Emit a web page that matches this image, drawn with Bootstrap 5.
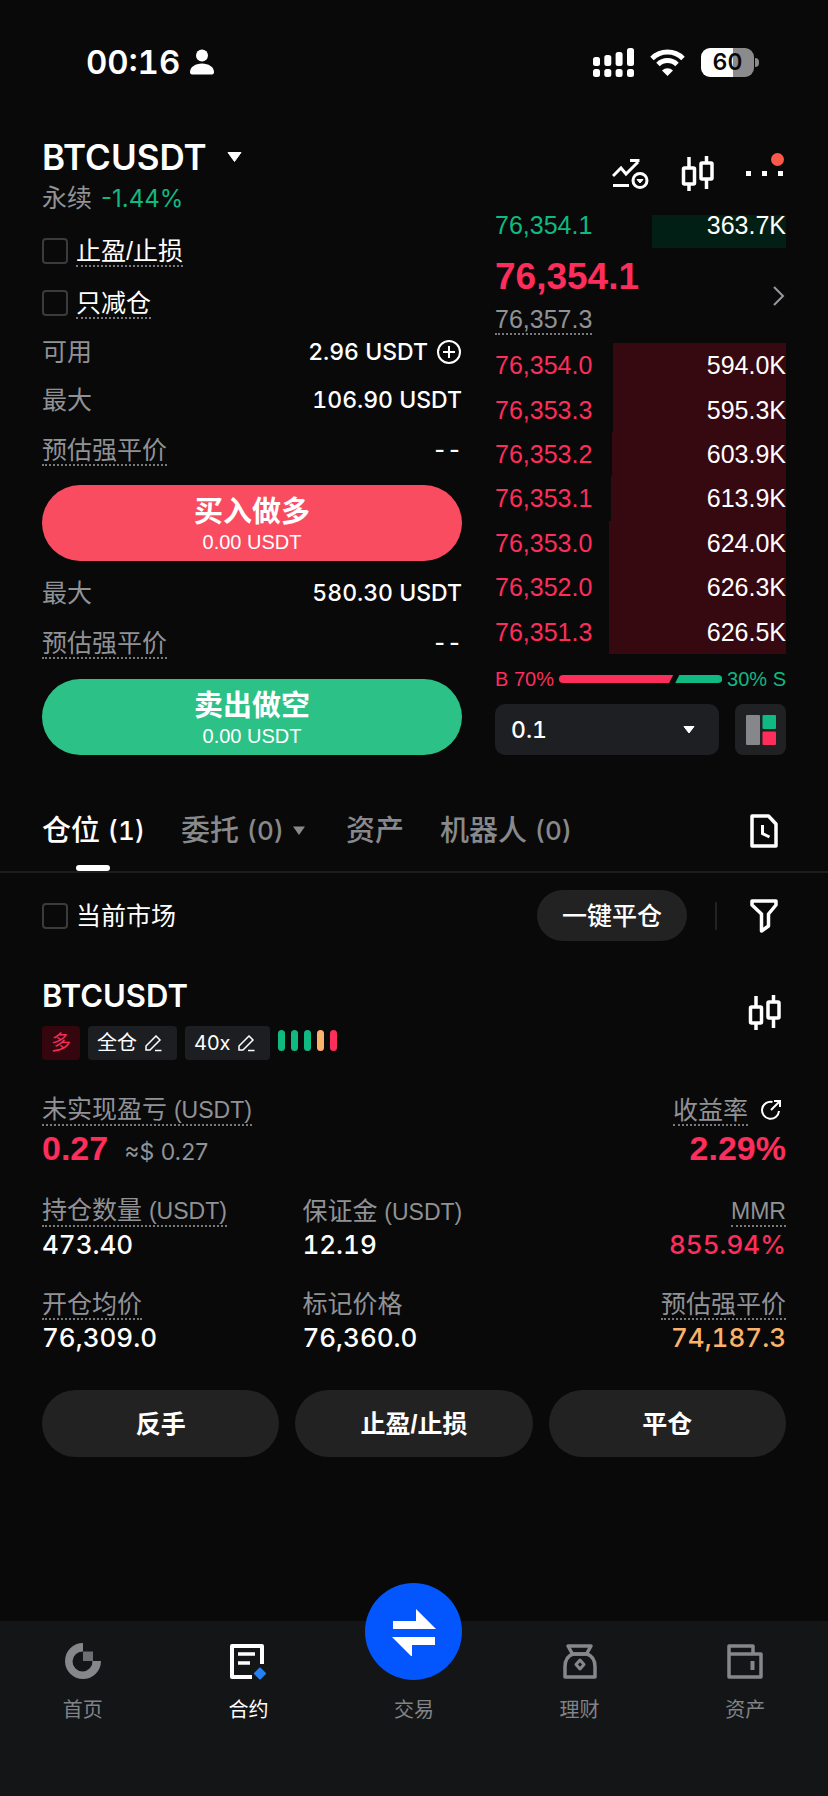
<!DOCTYPE html>
<html lang="zh-CN" data-bs-theme="dark">
<head>
<meta charset="utf-8">
<meta name="viewport" content="width=device-width, initial-scale=1">
<title>BTCUSDT 永续</title>
<link href="https://cdn.jsdelivr.net/npm/bootstrap@5.3.0/dist/css/bootstrap.min.css" rel="stylesheet">
<style>
  :root { --up: #fd2d5c; --down: #0fb981; --muted: #909296; --panel: #222222; --chip: #1c1e22; }
  body { background: #090909; color: #fff; font-family: "Liberation Sans", "Noto Sans CJK SC", sans-serif; font-size: 24px; line-height: 36px; }
  button, select { font-family: inherit; color: inherit; }
  svg { display: block; flex: none; }
  .gutter { padding-left: 42px; padding-right: 42px; }
  .inter { font-family: Inter, "Noto Sans CJK SC", sans-serif; font-variant-numeric: tabular-nums; }
  .inter.prop { font-variant-numeric: normal; }
  .c-up { color: var(--up); } .c-down { color: var(--down); } .c-muted { color: var(--muted); } .c-warn { color: #fbb26a; }
  .zh { font-size: 25px; }
  .zh .lat { font-size: 23px; }
  .hint { display: inline-block; line-height: 27px; margin-top: 2px; border-bottom: 2px dotted #77797c; white-space: nowrap; }
  .icon-btn { background: none; border: 0; padding: 0; display: block; }
  .tick.form-check-input { width: 26px; height: 26px; margin: 0; border: 2px solid #3b3b3d; border-radius: 4px; background-color: transparent; flex: none; }

  .status { padding: 40px 69px 48px 86px; }
  .status .clock { font-size: 33px; font-weight: 600; line-height: 44px; }
  .status .who { gap: 10px; }
  .battery { width: 53px; height: 29px; border-radius: 9px; background: linear-gradient(90deg, #fff 60%, #8b8b8b 60%); color: #090909; font-size: 23px; font-weight: 600; line-height: 29px; text-align: center; }
  .battery-tip { width: 4px; height: 9px; border-radius: 0 5px 5px 0; background: #8b8b8b; margin-left: 1px; }

  .pair { font-size: 35px; font-weight: 600; line-height: 50px; }
  .pair-sub { line-height: 33px; gap: 9px; }
  .dot-red { top: -18px; right: 2px; width: 13px; height: 13px; border-radius: 50%; background: #f95b4b; }

  .trade { display: grid; grid-template-columns: 420fr 291fr; column-gap: 33px; }
  .order { padding-top: 10px; }
  .opt { height: 52px; gap: 8px; }
  .info { height: 50px; }
  .info.avail { height: 46px; }
  .amount { font-size: 23px; font-weight: 500; }
  .cta { display: block; width: 100%; height: 76px; border: 0; color: #fff; padding: 4px 0 0; }
  .cta b { display: block; font-size: 29px; font-weight: 700; line-height: 34px; }
  .cta span { display: block; font-size: 20px; line-height: 26px; }
  .cta.buy { background: #f94c60; margin: 10px 0 7px; }
  .cta.sell { background: #2cc287; margin-top: 11px; }

  .depth { position: relative; display: flex; justify-content: space-between; align-items: center; font-size: 25px; }
  .depth i { position: absolute; top: 0; bottom: 0; right: 0; background: #360810; }
  .depth span { position: relative; }
  .depth.bid { height: 33px; align-items: flex-start; line-height: 20px; }
  .depth.bid i { background: #021f15; }
  .asks { display: grid; grid-auto-rows: 1fr; height: 311px; }
  .last { padding: 8px 0 3px; }
  .last strong { display: block; font-size: 37px; line-height: 42px; }
  .last .index-line { height: 42px; font-size: 25px; }
  .sentiment { height: 50px; font-size: 20px; gap: 5px; }
  .sentiment span { white-space: nowrap; }
  .sentiment svg { flex: 1; min-width: 0; height: 8px; }
  .step { height: 51px; border-radius: 10px; background-color: #1d1f23; border: 0; font-size: 23px; font-weight: 500; padding: 0 48px 0 16px; appearance: none; width: 100%; }
  .step-wrap { position: relative; flex: 1; }
  .step-wrap svg { position: absolute; right: 24px; top: 22px; pointer-events: none; }
  .book-mode { width: 51px; height: 51px; border-radius: 8px; background: #1f2123; }

  .tabs { margin-top: 36px; height: 82px; border-bottom: 2px solid #1d1d1d; gap: 36px; }
  .tabs a { position: relative; display: flex; align-items: center; height: 80px; font-size: 29px; font-weight: 500; color: #88898c; text-decoration: none; white-space: nowrap; }
  .tabs a span { font-size: 26px; }
  .tabs a.active { color: #fff; }
  .tabs a.active::after { content: ""; position: absolute; bottom: 0; left: calc(50% - 17px); width: 34px; height: 6px; border-radius: 3px; background: #fff; }
  .filters { height: 85px; }
  .close-all { height: 51px; border: 0; background: var(--panel); font-size: 25px; font-weight: 500; padding: 0 25px; }
  .rule { width: 2px; height: 28px; background: #222; margin: 0 33px 0 28px; }
  .pos-name { font-size: 31px; font-weight: 600; line-height: 44px; }
  .chip { height: 34px; border: 0; border-radius: 4px; background: var(--chip); font-size: 20px; padding: 0 15px 0 9px; display: flex; align-items: center; gap: 8px; line-height: 34px; }
  .chip.side { background: #36060f; color: #f32e58; padding: 0 9px; }
  .risk { gap: 6px; }
  .risk i { width: 7px; height: 21px; border-radius: 4px; background: var(--down); }
  .risk .mid { background: #fbb26a; }
  .risk .high { background: var(--up); }
  .pos-head { padding-top: 16px; margin-bottom: 32px; }
  .total { margin-bottom: 23px; }
  .stats { display: grid; grid-template-columns: 35fr 35fr 30fr; row-gap: 25px; }
  .name { height: 36px; display: flex; align-items: center; }
  .end { text-align: right; }
  .end .name { justify-content: flex-end; }
  .val { font-size: 26px; font-weight: 500; line-height: 32px; }
  .val-lg { font-size: 34px; font-weight: 700; line-height: 40px; }
  .acts { margin-top: 36px; }
  .act { height: 67px; border: 0; background: var(--panel); font-size: 25px; font-weight: 700; flex: 1 1 0; }

  .dock { background: #141517; height: 175px; padding-top: 20px; }
  .dock a { position: relative; flex: 1 1 0; display: flex; flex-direction: column; align-items: center; color: #818386; text-decoration: none; font-size: 20px; line-height: 30px; }
  .dock a svg { height: 40px; margin-bottom: 14px; }
  .dock a.active { color: #fff; }
  .dock .swap { position: absolute; top: -58px; width: 97px; height: 97px; border-radius: 50%; background: #0356fe; display: flex; align-items: center; justify-content: center; }
  .dock .swap svg { height: 48px; margin: 0; }
  .dock .swap-space { height: 54px; }
</style>
</head>
<body class="d-flex flex-column min-vh-100">

<svg width="0" height="0" class="position-absolute" aria-hidden="true">
  <symbol id="candles" viewBox="0 0 34 36">
    <g fill="none" stroke="#fff" stroke-width="3.500"><path d="M8 1v11M8 28v7M25.500 0v7M25.500 23v10"/><rect x="2.500" y="12" width="11" height="16" rx="1"/><rect x="20" y="7" width="11" height="16" rx="1"/></g>
  </symbol>
  <symbol id="pencil" viewBox="0 0 17 17">
    <path d="M1 15V11L11 1l4 4L5 15zM10 15.500h6.500" fill="none" stroke="#fff" stroke-width="1.500"/>
  </symbol>
</svg>

<div class="status d-flex justify-content-between align-items-center">
  <div class="who d-flex align-items-center">
    <span class="clock inter">00:16</span>
    <svg width="24" height="26" viewBox="0 0 24 26" fill="#fff"><circle cx="12" cy="6.500" r="6"/><path d="M0 23c0-5 5.500-8.500 12-8.500S24 18 24 23c0 1.500-.7 2.500-2 2.500H2C.7 25.500 0 24.500 0 23z"/></svg>
  </div>
  <div class="d-flex align-items-center">
    <svg width="41" height="29" viewBox="0 0 41 29" fill="#fff"><rect y="9" width="7" height="9" rx="2.500"/><rect x="11.300" y="7" width="7" height="11" rx="2.500"/><rect x="22.600" y="4" width="7" height="14" rx="2.500"/><rect x="34" width="7" height="18" rx="2.500"/><rect y="21" width="7" height="8" rx="2.500"/><rect x="11.300" y="21" width="7" height="8" rx="2.500"/><rect x="22.600" y="21" width="7" height="8" rx="2.500"/><rect x="34" y="21" width="7" height="8" rx="2.500"/></svg>
    <svg class="mx-3" width="35" height="27" viewBox="0 0 35 27"><g fill="none" stroke="#fff" stroke-width="5"><path d="M2 9.500a22 22 0 0 1 31 0"/><path d="M8 15.500a13.500 13.500 0 0 1 19 0"/></g><path d="M17.500 27l-5.500-5.600a8 8 0 0 1 11 0z" fill="#fff"/></svg>
    <div class="battery inter">60</div><div class="battery-tip"></div>
  </div>
</div>

<header class="gutter d-flex justify-content-between align-items-center">
  <div>
    <button type="button" class="icon-btn pair inter d-flex align-items-center">BTCUSDT
      <svg class="ms-3" width="22" height="11" viewBox="0 0 22 11"><path d="M5 .5h13l-6.500 9z" fill="#fff" stroke="#fff" stroke-linejoin="round"/></svg>
    </button>
    <div class="pair-sub d-flex"><span class="zh c-muted">永续</span><span class="inter prop c-down">-1.44%</span></div>
  </div>
  <div class="d-flex align-items-center">
    <button type="button" class="icon-btn" aria-label="策略">
      <svg width="37" height="32" viewBox="0 0 37 32" fill="none" stroke="#fff" stroke-width="3"><path d="M1 18l8-8 5 6L26 4M18 2.500h9.500M1 27.500h16"/><circle cx="28" cy="22.500" r="7"/><path d="M25 21.500h6l-3 3.500z" fill="#fff" stroke-width="1"/></svg>
    </button>
    <button type="button" class="icon-btn ms-4 ps-2" aria-label="K线"><svg width="34" height="36"><use href="#candles"/></svg></button>
    <button type="button" class="icon-btn ms-4 ps-1 position-relative" aria-label="更多">
      <svg width="43" height="6" viewBox="0 0 43 6" fill="#fff"><rect x="3" width="5" height="5"/><rect x="19" width="5" height="5"/><rect x="35" width="5" height="5"/></svg>
      <span class="dot-red position-absolute"></span>
    </button>
  </div>
</header>

<main>
  <section class="trade gutter">
    <form class="order">
      <div class="opt d-flex align-items-center"><input class="form-check-input tick" type="checkbox" id="tpsl"><label for="tpsl" class="zh"><span class="hint">止盈/止损</span></label></div>
      <div class="opt d-flex align-items-center"><input class="form-check-input tick" type="checkbox" id="reduce"><label for="reduce" class="zh"><span class="hint">只减仓</span></label></div>
      <div class="info avail d-flex justify-content-between align-items-center">
        <span class="zh c-muted">可用</span>
        <span class="amount inter d-flex align-items-center gap-2">2.96 USDT
          <button type="button" class="icon-btn" aria-label="充值"><svg width="26" height="26" viewBox="0 0 26 26" fill="none" stroke="#fff" stroke-width="2"><circle cx="13" cy="13" r="11"/><path d="M7 13h12M13 7v12"/></svg></button>
        </span>
      </div>
      <div class="info d-flex justify-content-between align-items-center"><span class="zh c-muted">最大</span><span class="amount inter">106.90 USDT</span></div>
      <div class="info d-flex justify-content-between align-items-center"><span class="zh c-muted hint">预估强平价</span><span class="amount inter">--</span></div>
      <button type="button" class="cta buy rounded-pill"><b>买入做多</b><span>0.00 USDT</span></button>
      <div class="info d-flex justify-content-between align-items-center"><span class="zh c-muted">最大</span><span class="amount inter">580.30 USDT</span></div>
      <div class="info d-flex justify-content-between align-items-center"><span class="zh c-muted hint">预估强平价</span><span class="amount inter">--</span></div>
      <button type="button" class="cta sell rounded-pill"><b>卖出做空</b><span>0.00 USDT</span></button>
    </form>

    <div>
      <div class="depth bid"><i style="width:46%"></i><span class="c-down">76,354.1</span><span>363.7K</span></div>
      <div class="last d-flex justify-content-between align-items-center">
        <div>
          <strong class="c-up">76,354.1</strong>
          <div class="index-line d-flex align-items-center c-muted"><span class="hint">76,357.3</span></div>
        </div>
        <button type="button" class="icon-btn mb-1" aria-label="详情"><svg width="15" height="20" viewBox="0 0 15 20" fill="none" stroke="#96989c" stroke-width="2"><path d="M3 1l9 9-9 9"/></svg></button>
      </div>
      <div class="asks">
        <div class="depth"><i style="width:59.4%"></i><span class="c-up">76,354.0</span><span>594.0K</span></div>
        <div class="depth"><i style="width:59.5%"></i><span class="c-up">76,353.3</span><span>595.3K</span></div>
        <div class="depth"><i style="width:59.8%"></i><span class="c-up">76,353.2</span><span>603.9K</span></div>
        <div class="depth"><i style="width:60.1%"></i><span class="c-up">76,353.1</span><span>613.9K</span></div>
        <div class="depth"><i style="width:60.8%"></i><span class="c-up">76,353.0</span><span>624.0K</span></div>
        <div class="depth"><i style="width:60.8%"></i><span class="c-up">76,352.0</span><span>626.3K</span></div>
        <div class="depth"><i style="width:60.8%"></i><span class="c-up">76,351.3</span><span>626.5K</span></div>
      </div>
      <div class="sentiment d-flex align-items-center">
        <span class="c-up">B 70%</span>
        <svg viewBox="0 0 160 8" preserveAspectRatio="none"><path d="M4 0h108l-4 8H4a4 4 0 0 1 0-8z" fill="#fd2d5c"/><path d="M118 0h38a4 4 0 0 1 0 8h-42z" fill="#0fb981"/></svg>
        <span class="c-down">30% S</span>
      </div>
      <div class="d-flex">
        <div class="step-wrap me-3">
          <select class="step inter" aria-label="深度精度"><option>0.1</option></select>
          <svg width="12" height="8" viewBox="0 0 12 8"><path d="M1 .5h10L6 7z" fill="#fff" stroke="#fff" stroke-linejoin="round"/></svg>
        </div>
        <button type="button" class="icon-btn book-mode d-flex align-items-center justify-content-center" aria-label="盘口布局">
          <svg width="30" height="30" viewBox="0 0 30 30"><rect width="14" height="30" rx="1" fill="#85878a"/><rect x="16.500" width="13.500" height="14" rx="1" fill="#0fb981"/><rect x="16.500" y="16.500" width="13.500" height="13.500" rx="1" fill="#fd2d5c"/></svg>
        </button>
      </div>
    </div>
  </section>

  <nav class="tabs gutter d-flex align-items-center inter">
    <a href="#" class="active">仓位&nbsp;<span>(1)</span></a>
    <a href="#">委托&nbsp;<span>(0)</span><svg class="ms-2 me-1" width="14" height="10" viewBox="0 0 14 10"><path d="M1 .5h12L7 9z" fill="#88898c"/></svg></a>
    <a href="#">资产</a>
    <a href="#">机器人&nbsp;<span>(0)</span></a>
    <button type="button" class="icon-btn ms-auto me-2" aria-label="历史"><svg width="28" height="34" viewBox="0 0 28 34" fill="none" stroke="#fff" stroke-width="3.500" stroke-linejoin="round"><path d="M2 2h16.500l7.500 8v22H2z"/><path d="M12.500 11v8.500l7 3.500" stroke-width="3" stroke-linejoin="miter"/></svg></button>
  </nav>

  <div class="filters gutter d-flex align-items-center">
    <input class="form-check-input tick" type="checkbox" id="market"><label for="market" class="zh ms-2">当前市场</label>
    <button type="button" class="close-all rounded-pill ms-auto">一键平仓</button>
    <div class="rule"></div>
    <button type="button" class="icon-btn me-2" aria-label="筛选"><svg width="28" height="34" viewBox="0 0 28 34" fill="none" stroke="#fff" stroke-width="3.500" stroke-linejoin="round"><path d="M2 2h24v4l-7.500 9v12l-7 5V15L2 6z"/></svg></button>
  </div>

  <section class="gutter">
    <div class="pos-head d-flex justify-content-between align-items-center">
      <div>
        <div class="pos-name inter">BTCUSDT</div>
        <div class="d-flex gap-2 mt-2">
          <span class="chip side">多</span>
          <button type="button" class="chip inter prop">全仓<svg width="17" height="17"><use href="#pencil"/></svg></button>
          <button type="button" class="chip inter prop">40x<svg width="17" height="17"><use href="#pencil"/></svg></button>
          <span class="risk d-flex pt-1"><i></i><i></i><i></i><i class="mid"></i><i class="high"></i></span>
        </div>
      </div>
      <button type="button" class="icon-btn mb-2 me-1" aria-label="K线"><svg width="34" height="36"><use href="#candles"/></svg></button>
    </div>

    <div class="total d-flex justify-content-between">
      <div>
        <div class="name zh c-muted"><span class="hint">未实现盈亏 <span class="lat">(USDT)</span></span></div>
        <div class="d-flex align-items-baseline"><span class="val-lg c-up">0.27</span><span class="inter prop c-muted ms-3 amount fw-normal">≈$ 0.27</span></div>
      </div>
      <div class="end">
        <div class="name zh c-muted"><span class="hint">收益率</span>
          <button type="button" class="icon-btn ms-2 ps-1 me-1" aria-label="分享"><svg width="22" height="22" viewBox="0 0 22 22" fill="none" stroke="#fff" stroke-width="2"><path d="M12.500 3A8.500 8.500 0 1 0 19 12M11 11l8-8M14 2h6v6"/></svg></button></div>
        <div class="val-lg c-up">2.29%</div>
      </div>
    </div>
    <div class="stats">
      <div><div class="name zh c-muted"><span class="hint">持仓数量 <span class="lat">(USDT)</span></span></div><div class="val inter">473.40</div></div>
      <div><div class="name zh c-muted"><span>保证金 <span class="lat">(USDT)</span></span></div><div class="val inter">12.19</div></div>
      <div class="end"><div class="name zh c-muted"><span class="hint"><span class="lat">MMR</span></span></div><div class="val inter c-up">855.94%</div></div>
      <div><div class="name zh c-muted"><span class="hint">开仓均价</span></div><div class="val inter">76,309.0</div></div>
      <div><div class="name zh c-muted"><span>标记价格</span></div><div class="val inter">76,360.0</div></div>
      <div class="end"><div class="name zh c-muted"><span class="hint">预估强平价</span></div><div class="val inter c-warn">74,187.3</div></div>
    </div>
    <div class="acts d-flex gap-3 mb-5">
      <button type="button" class="act rounded-pill">反手</button>
      <button type="button" class="act rounded-pill">止盈/止损</button>
      <button type="button" class="act rounded-pill">平仓</button>
    </div>
  </section>
</main>

<nav class="dock d-flex mt-auto">
  <a href="#"><svg width="36" viewBox="0 0 36 40" fill="#85878a"><path d="M18 2v8.500a10 10 0 1 0 9.500 9.500H36A18 18 0 1 1 18 2z"/><path d="M18 10.500h10V20H18z" fill="#6d6f72"/></svg>首页</a>
  <a href="#" class="active"><svg width="36" viewBox="0 0 36 40" fill="none" stroke="#fff" stroke-width="4"><path d="M32 23V5H2v31h20" stroke-linejoin="round"/><path d="M8 13h17M8 22h12" stroke-width="3.500"/><path d="M30 27.500l5 5-5 5-5-5z" fill="#2480f5" stroke="#2480f5" stroke-width="2" stroke-linejoin="round"/></svg>合约</a>
  <a href="#"><span class="swap"><svg width="48" viewBox="0 0 48 48" fill="#fff"><path d="M3 13h23V1l20 20H3zM45 29v8H22v12L2 29z"/></svg></span><span class="swap-space"></span>交易</a>
  <a href="#"><svg width="36" viewBox="0 0 36 40" fill="none" stroke="#85878a" stroke-width="3.500" stroke-linejoin="round"><path d="M6 5h23l-4.500 8h-14z"/><path d="M11 13C5 15 3 20 3 26v10h30V26c0-6-2-11-8-13z"/><path d="M18 19l4 4.500-4 4.500-4-4.500z" stroke-width="3"/></svg>理财</a>
  <a href="#"><svg width="36" viewBox="0 0 36 40" fill="none" stroke="#85878a" stroke-width="3.500" stroke-linejoin="round"><path d="M2 13v23h32V13zM2 13V5h24v8"/><path d="M25.500 20v9" stroke-width="4"/></svg>资产</a>
</nav>

<script src="https://cdn.jsdelivr.net/npm/bootstrap@5.3.0/dist/js/bootstrap.bundle.min.js"></script>
</body>
</html>
